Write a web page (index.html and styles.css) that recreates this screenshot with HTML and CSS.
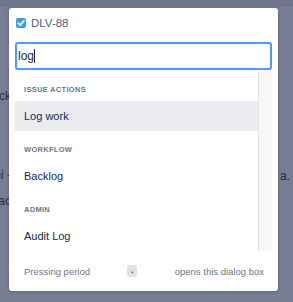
FILE: index.html
```html
<!DOCTYPE html>
<html>
<head>
<meta charset="utf-8">
<link rel="stylesheet" href="styles.css">
</head>
<body>
<div class="page">
  <div class="topband"></div>
  <div class="bg-cols">
    <div class="bg-left">
      <div class="bg-line l1"><span>Backlog back</span></div>
      <div class="bg-line l2"><span>Sprint mi -</span></div>
      <div class="bg-line l3"><span>Track ac</span></div>
    </div>
    <div class="bg-right">
      <div class="bg-line r1"><span>a.</span></div>
    </div>
  </div>
</div>

<div class="dialog">
  <div class="issue">
    <span class="check">
      <svg width="10" height="10" viewBox="0 0 10 10"><path d="M2.2 5.2 L4.2 7.1 L7.9 2.9" fill="none" stroke="#fff" stroke-width="1.6" stroke-linecap="round" stroke-linejoin="round"/></svg>
    </span>
    <span class="key">DLV-88</span>
  </div>
  <div class="search">
    <div class="input">log<span class="caret"></span></div>
    <div class="results">
      <div class="list">
        <div class="group">Issue actions</div>
        <div class="item active">Log work</div>
        <div class="group">Workflow</div>
        <div class="item">Backlog</div>
        <div class="group">Admin</div>
        <div class="item">Audit Log</div>
      </div>
      <div class="scrollbar"></div>
    </div>
  </div>
  <div class="footer">
    <span>Pressing period</span>
    <span class="kbd">.</span>
    <span>opens this dialog box</span>
  </div>
</div>
</body>
</html>
```

FILE: styles.css
```css
html, body {
  margin: 0;
  padding: 0;
}
body {
  width: 293px;
  height: 302px;
  overflow: hidden;
  background: #777d92;
  font-family: "Liberation Sans", Arial, sans-serif;
  position: relative;
}
.page {
  height: 302px;
}
.topband {
  height: 7px;
  background: #70768b;
}
.bg-cols {
  display: flex;
  justify-content: space-between;
}
.bg-left, .bg-right {
  width: 11px;
  overflow: hidden;
  color: #262c45;
  font-size: 12px;
}
.bg-right {
  width: 13px;
}
.bg-line {
  display: flex;
  justify-content: flex-end;
  white-space: nowrap;
  height: 16px;
  line-height: 16px;
}
.bg-right .bg-line {
  justify-content: flex-start;
}
.l1 { margin-top: 81px; }
.l2 { margin-top: 63px; }
.l3 { margin-top: 10px; }
.r1 { margin-top: 161px; }

.dialog {
  position: absolute;
  left: 9px;
  top: 8px;
  width: 269px;
  height: 283px;
  background: #fff;
  border-radius: 3px;
  box-shadow: 0 1px 3px rgba(9, 30, 66, 0.25);
  display: flex;
  flex-direction: column;
  box-sizing: border-box;
  padding: 0 6px;
}
.issue {
  display: flex;
  align-items: center;
  gap: 5px;
  height: 30px;
  padding-left: 1px;
}
.check {
  width: 10px;
  height: 10px;
  border-radius: 2px;
  background: #3d9ee6;
  display: flex;
}
.key {
  font-size: 11.5px;
  color: #505f79;
}
.search {
  margin-top: 4px;
}
.input {
  height: 28px;
  box-sizing: border-box;
  border: 2px solid #4c9aff;
  border-radius: 3px;
  font-size: 12px;
  color: #172b4d;
  line-height: 24px;
  padding-left: 1px;
  display: flex;
  align-items: center;
}
.caret {
  width: 1px;
  height: 14px;
  background: #172b4d;
}
.results {
  display: flex;
  height: 181px;
}
.list {
  flex: 1;
  padding-top: 1px;
}
.group {
  height: 30px;
  box-sizing: border-box;
  padding: 14px 0 0 9px;
  font-size: 7.5px;
  line-height: 10px;
  font-weight: bold;
  letter-spacing: 0.3px;
  text-transform: uppercase;
  color: #6b778c;
}
.item {
  height: 30px;
  line-height: 30px;
  padding-left: 9px;
  font-size: 11px;
  color: #172b4d;
}
.item.active {
  background: #ebecf0;
}
.scrollbar {
  width: 13px;
  margin-top: 2px;
  height: 179px;
  background: #f7f7f7;
  border-left: 1px solid #e4e4e4;
}
.footer {
  flex: 1;
  display: flex;
  align-items: center;
  justify-content: space-between;
  padding: 0 8px 0 9px;
  font-size: 9.5px;
  color: #6b778c;
}
.kbd {
  width: 10px;
  height: 12px;
  background: #dfe1e6;
  border-radius: 2px;
  text-align: center;
  line-height: 10px;
  color: #42526e;
  font-weight: bold;
}
```
